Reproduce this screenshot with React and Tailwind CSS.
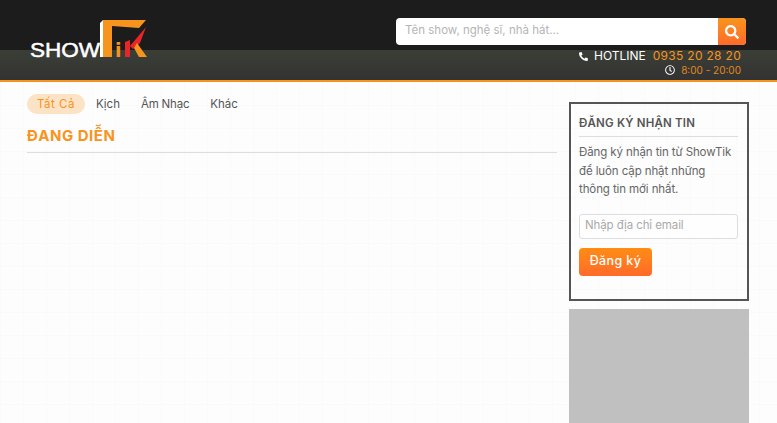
import React from 'react'

import { FaPhone, FaRegClock, FaSearch } from 'react-icons/fa'

const fontClass = 'font-["Inter","Noto_Sans",sans-serif]'

function Logo() {
    return (
        <svg width="120" height="46" viewBox="0 0 120 46" className="absolute left-[29px] top-[19px]" aria-label="ShowTik">
            <polygon points="73,1 117,1 110,9 83,7 83,38 74,38 74,1" fill="#f7941d" />
            <polygon points="71,4 74,1 74,38 71,38" fill="#fff" />
            <text x="1" y="38" fill="#fff" fontFamily="Liberation Sans" fontWeight="400" stroke="#fff" strokeWidth="0.5" fontSize="20" textLength="70" lengthAdjust="spacingAndGlyphs">
                SHOW
            </text>
            <text x="86" y="38" fill="#f7941d" fontFamily="DejaVu Sans" fontWeight="700" fontSize="19">
                i
            </text>
            <polygon points="96,38 96,23 101,21 101,38" fill="#e8262a" />
            <polygon points="101,27 117,8 111,24 104,30" fill="#e8262a" />
            <polygon points="105,29 108,24 118,38 110,38" fill="#f7941d" />
        </svg>
    )
}

function Header() {
    return (
        <header className="relative h-[82px] border-b-2 border-[#f7941d] bg-[linear-gradient(#1c1c1c_50px,#3b3e36_50px,#333333_80px)]">
            <Logo />
            <div className="absolute left-[396px] top-[18px] flex h-[27px] w-[350px] overflow-hidden rounded-[4px] bg-white">
                <div className="flex-1 pl-[9px] text-[11.5px] leading-[24px] text-[#b5b5b5]">Tên show, nghệ sĩ, nhà hát...</div>
                <div className="flex w-[28px] items-center justify-center bg-gradient-to-b from-[#f7941d] to-[#ff6a28]">
                    <FaSearch size={14} className="text-white" />
                </div>
            </div>
            <div className="absolute right-[36px] top-[49px] flex flex-col items-end">
                <div className="flex h-[14px] items-center text-[12px] leading-[14px] text-white">
                    <FaPhone size={9} className="mr-[6px] -scale-x-100" />
                    HOTLINE
                    <span className="ml-[7px] tracking-[0.3px] text-[#f7941d]">0935 20 28 20</span>
                </div>
                <div className="flex h-[14px] items-center text-[10px] leading-[14px] text-[#e08a20]">
                    <FaRegClock size={10} className="mr-[6px] text-white" />
                    8:00 - 20:00
                </div>
            </div>
        </header>
    )
}

function Tabs() {
    return (
        <div className="flex items-center text-[11.5px] leading-5 text-[#555]">
            <span className="flex h-5 items-center rounded-full bg-[#fde3c6] px-[10px] tracking-[0.5px] text-[#f7941d]">Tất Cả</span>
            <span className="ml-[11px]">Kịch</span>
            <span className="ml-[21px] tracking-[-0.2px]">Âm Nhạc</span>
            <span className="ml-[21px]">Khác</span>
        </div>
    )
}

function Newsletter() {
    return (
        <div className="h-[199px] border-2 border-[#555] pt-[9px] pr-[9px] pl-[8px]">
            <h3 className="border-b border-[#ddd] pb-[3px] text-[11.5px] leading-[20px] font-semibold tracking-[0.2px] text-[#555]">ĐĂNG KÝ NHẬN TIN</h3>
            <p className="mt-[6px] text-[11.5px] leading-[18.5px] tracking-[-0.1px] text-[#666]">
                Đăng ký nhận tin từ ShowTik
                <br />
                để luôn cập nhật những
                <br />
                thông tin mới nhất.
            </p>
            <div className="mt-[15px] h-[25px] rounded-[3px] border border-[#ddd] bg-white/60 pl-[5px] text-[11.5px] leading-[20px] tracking-[-0.1px] text-[#aaa]">Nhập địa chỉ email</div>
            <button className="mt-[9px] h-7 w-[73px] rounded-[4px] bg-gradient-to-b from-[#ff8c12] to-[#ff6a28] text-[12.5px] font-medium tracking-[0.4px] text-white">Đăng ký</button>
        </div>
    )
}

export default function App() {
    return (
        <div className={`h-[423px] w-[777px] overflow-hidden bg-[#fdfdfd] ${fontClass}`}>
            <Header />
            <main className="flex h-[341px] bg-[linear-gradient(#fafafa_1px,transparent_1px),linear-gradient(90deg,#fafafa_1px,transparent_1px)] bg-[size:23px_23px] pt-[12px] pl-[27px]">
                <section className="w-[530px]">
                    <Tabs />
                    <h2 className="mt-[10px] border-b border-[#ddd] pb-[4px] text-[15px] leading-[24px] font-bold tracking-[0.5px] text-[#f7941d]">ĐANG DIỄN</h2>
                </section>
                <aside className="mt-[8px] ml-[12px] w-[180px]">
                    <Newsletter />
                    <div className="mt-[8px] h-[200px] bg-[#c0c0c0]" />
                </aside>
            </main>
        </div>
    )
}
